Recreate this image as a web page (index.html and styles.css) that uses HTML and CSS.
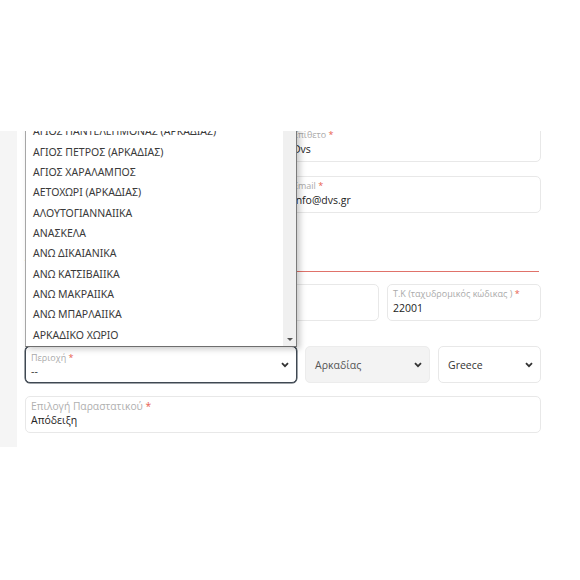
FILE: index.html
```html
<!DOCTYPE html>
<html lang="el">
<head>
  <meta charset="UTF-8">
  <title>Checkout - Στοιχεία Παραγγελίας</title>
  <link rel="stylesheet" href="styles.css">
</head>
<body>
  <div class="shot">
    <div class="side"></div>
    <div class="main">
      <form class="checkout-form">
        <div class="row two">
          <div class="field">
            <label>Όνομα <span class="req">*</span></label>
            <div class="value">Dvs</div>
          </div>
          <div class="field">
            <label>Επίθετο <span class="req">*</span></label>
            <div class="value">Dvs</div>
          </div>
        </div>

        <div class="row two">
          <div class="field">
            <label>Τηλέφωνο <span class="req">*</span></label>
            <div class="value">2710000000</div>
          </div>
          <div class="field">
            <label>Email <span class="req">*</span></label>
            <div class="value">info@dvs.gr</div>
          </div>
        </div>

        <div class="section-title">
          <h3>Διεύθυνση αποστολής</h3>
        </div>

        <div class="row addr">
          <div class="field">
            <label>Διεύθυνση <span class="req">*</span></label>
            <div class="value"></div>
          </div>
          <div class="field">
            <label>Τ.Κ (ταχυδρομικός κώδικας ) <span class="req">*</span></label>
            <div class="value">22001</div>
          </div>
        </div>

        <div class="row loc">
          <div class="field select focused">
            <div class="select-text">
              <label>Περιοχή <span class="req">*</span></label>
              <div class="value">--</div>
            </div>
            <svg class="chev" width="8" height="6" viewBox="0 0 8 6"><polyline points="1,1.2 4,4.2 7,1.2" fill="none" stroke="#333" stroke-width="1.8"/></svg>

            <div class="dropdown">
              <ul class="options">
                <li>ΑΓΙΟΣ ΠΑΝΤΕΛΕΗΜΟΝΑΣ (ΑΡΚΑΔΙΑΣ)</li>
                <li>ΑΓΙΟΣ ΠΕΤΡΟΣ (ΑΡΚΑΔΙΑΣ)</li>
                <li>ΑΓΙΟΣ ΧΑΡΑΛΑΜΠΟΣ</li>
                <li>ΑΕΤΟΧΩΡΙ (ΑΡΚΑΔΙΑΣ)</li>
                <li>ΑΛΟΥΤΟΓΙΑΝΝΑΙΙΚΑ</li>
                <li>ΑΝΑΣΚΕΛΑ</li>
                <li>ΑΝΩ ΔΙΚΑΙΑΝΙΚΑ</li>
                <li>ΑΝΩ ΚΑΤΣΙΒΑΙΙΚΑ</li>
                <li>ΑΝΩ ΜΑΚΡΑΙΙΚΑ</li>
                <li>ΑΝΩ ΜΠΑΡΛΑΙΙΚΑ</li>
                <li>ΑΡΚΑΔΙΚΟ ΧΩΡΙΟ</li>
              </ul>
              <div class="scrollbar"><span class="arrow-down"></span></div>
            </div>
          </div>
          <div class="field select disabled">
            <div class="value">Αρκαδίας</div>
            <svg class="chev" width="8" height="6" viewBox="0 0 8 6"><polyline points="1,1.2 4,4.2 7,1.2" fill="none" stroke="#333" stroke-width="1.8"/></svg>
          </div>
          <div class="field select">
            <div class="value">Greece</div>
            <svg class="chev" width="8" height="6" viewBox="0 0 8 6"><polyline points="1,1.2 4,4.2 7,1.2" fill="none" stroke="#333" stroke-width="1.8"/></svg>
          </div>
        </div>

        <div class="row one">
          <div class="field doc">
            <label>Επιλογή Παραστατικού <span class="req">*</span></label>
            <div class="value">Απόδειξη</div>
          </div>
        </div>
      </form>
    </div>
  </div>
</body>
</html>
```

FILE: styles.css
```css
body {
  margin: 0;
  background: #fff;
  font-family: 'Open Sans', 'Noto Sans', sans-serif;
  color: #333;
}

.shot {
  margin-top: 131px;
  height: 316px;
  display: flex;
  overflow: hidden;
}

.side {
  width: 17px;
  background: #f5f5f5;
  flex-shrink: 0;
}

.main {
  padding-left: 8px;
  width: 516px;
}

.checkout-form {
  display: flex;
  flex-direction: column;
  margin-top: -6px;
}

.row {
  display: grid;
  gap: 8px;
}

.row.two {
  grid-template-columns: 1fr 1fr;
}

.row.two + .row.two {
  margin-top: 14px;
}

.row.addr {
  grid-template-columns: 1fr 154px;
  margin-top: 12px;
}

.row.loc {
  grid-template-columns: 272px 125px 1fr;
  margin-top: 25px;
}

.row.one {
  margin-top: 13px;
}

.section-title {
  margin-top: 14px;
  height: 44px;
  border-bottom: 1px solid #e0726a;
  margin-right: 2px;
  display: flex;
  align-items: flex-end;
}

.section-title h3 {
  margin: 0 0 6px;
  font-size: 13px;
  font-weight: 600;
  color: #333;
}

.field {
  position: relative;
  height: 37px;
  box-sizing: border-box;
  border: 1px solid #e8e8e8;
  border-radius: 5px;
  padding: 3px 5px;
  background: #fff;
}

.field label {
  display: block;
  font-size: 9px;
  line-height: 12px;
  color: #aaa;
}

.field .req {
  color: #e8604f;
}

.field .value {
  font-size: 10.5px;
  line-height: 16px;
  color: #222;
  white-space: nowrap;
}

.field.doc label {
  font-size: 10.3px;
  line-height: 13px;
  color: #b0b0b0;
}

.field.doc .value {
  line-height: 14px;
}

.field.select {
  display: flex;
  align-items: center;
  justify-content: space-between;
  padding: 0 7px 0 9px;
}

.field.select .value {
  color: #333;
}

.field.select.disabled {
  background: #f3f3f3;
  border-color: #ececec;
}

.field.select.disabled .value {
  color: #555;
}

.field.focused {
  padding-left: 5px;
  border: 1px solid #3f4852;
  box-shadow: 0 0 0 0.5px #3f4852;
}

.field.focused .value {
  line-height: 14px;
}

.select-text {
  padding-top: 1px;
}

.chev {
  flex-shrink: 0;
}

/* open list of the Περιοχή select */
.dropdown {
  position: absolute;
  left: -1px;
  right: -1px;
  bottom: 100%;
  height: 240px;
  box-sizing: border-box;
  background: #fff;
  border: 1px solid #a6a6a6;
  border-right-color: #7a7a7a;
  border-bottom-color: #6e6e6e;
  box-shadow: 3px 2px 6px rgba(0, 0, 0, 0.22);
  display: flex;
  z-index: 5;
}

.options {
  list-style: none;
  margin: 0;
  padding: 0 0 1px;
  flex: 1;
  display: flex;
  flex-direction: column;
  justify-content: flex-end;
  overflow: hidden;
}

.options li {
  font-family: 'Noto Sans', 'Open Sans', sans-serif;
  font-size: 10.5px;
  line-height: 20.33px;
  padding-left: 7px;
  color: #3a3a3a;
  white-space: nowrap;
}

.scrollbar {
  width: 13px;
  background: #f0f0f0;
  display: flex;
  align-items: flex-end;
  justify-content: center;
  padding-bottom: 5px;
  box-sizing: border-box;
}

.arrow-down {
  width: 0;
  height: 0;
  border-left: 3px solid transparent;
  border-right: 3px solid transparent;
  border-top: 3px solid #555;
}
```
